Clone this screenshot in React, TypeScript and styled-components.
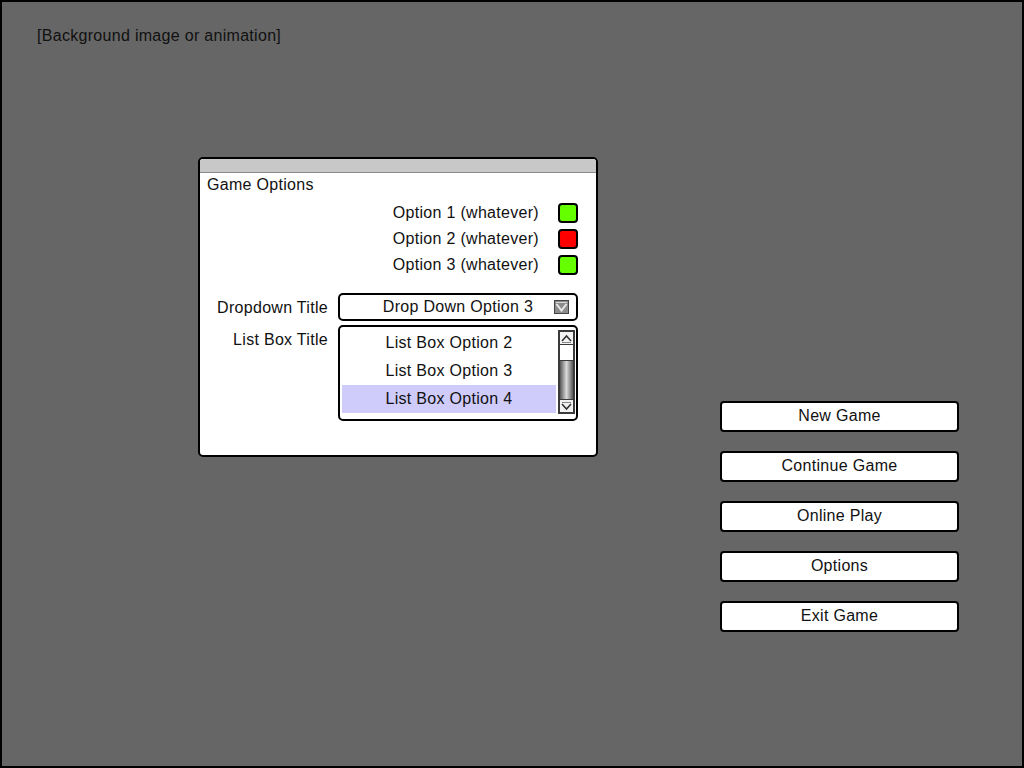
import React from 'react';
import styled, { createGlobalStyle } from 'styled-components';

const GlobalStyle = createGlobalStyle`
  html, body {
    margin: 0;
    padding: 0;
    background: #666;
  }
  body {
    font-family: 'Liberation Sans', Arial, sans-serif;
  }
  * {
    box-sizing: border-box;
  }
`;

const options = [
    { label: 'Option 1 (whatever)', on: true },
    { label: 'Option 2 (whatever)', on: false },
    { label: 'Option 3 (whatever)', on: true },
];

const listItems = ['List Box Option 2', 'List Box Option 3', 'List Box Option 4'];
const menuItems = ['New Game', 'Continue Game', 'Online Play', 'Options', 'Exit Game'];

const Screen = styled.div`
  width: 1024px;
  height: 768px;
  background: #666;
  border: 2px solid #000;
  font-size: 16px;
  line-height: 18px;
  letter-spacing: 0.3px;
  color: #111;
  display: flex;
  flex-direction: column;
`;

const Caption = styled.div`
  padding: 25px 0 0 35px;
  height: 42px;
`;

const Stage = styled.div`
  display: flex;
  align-items: flex-start;
`;

const Dialog = styled.section`
  width: 400px;
  height: 300px;
  margin: 113px 0 0 196px;
  background: #fff;
  border: 2px solid #000;
  border-radius: 5px;
  overflow: hidden;
  display: flex;
  flex-direction: column;
`;

const TitleBar = styled.div`
  height: 14px;
  background: #c8c8c8;
  border-bottom: 1px solid #8a8a8a;
`;

const DialogBody = styled.div`
  padding: 3px 18px 0 7px;
`;

const OptionList = styled.div`
  margin-top: 6px;
  display: flex;
  flex-direction: column;
  align-items: flex-end;
`;

const OptionRow = styled.div`
  height: 26px;
  display: flex;
  align-items: center;
  gap: 19px;
`;

const Toggle = styled.span<{ $on: boolean }>`
  width: 20px;
  height: 20px;
  border: 2px solid #000;
  border-radius: 4px;
  background: ${({ $on }) => ($on ? '#66ff00' : '#ff0000')};
`;

const Fields = styled.div`
  margin-top: 15px;
  display: grid;
  grid-template-columns: 1fr 240px;
  column-gap: 10px;
  row-gap: 4px;
`;

const FieldLabel = styled.div<{ $top?: boolean }>`
  text-align: right;
  align-self: ${({ $top }) => ($top ? 'start' : 'center')};
  margin-top: ${({ $top }) => ($top ? '6px' : '1px')};
`;

const Dropdown = styled.div`
  height: 28px;
  border: 2px solid #000;
  border-radius: 5px;
  display: grid;
  grid-template-columns: 24px 1fr 24px;
  align-items: center;
  text-align: center;
`;

const DropIcon = styled.svg`
  justify-self: start;
  margin-left: 2px;
  display: block;
`;

const ListBox = styled.div`
  height: 96px;
  border: 2px solid #000;
  border-radius: 5px;
  padding: 2px 1px 0 2px;
  display: flex;
`;

const Items = styled.div`
  flex: 1;
  display: flex;
  flex-direction: column;
`;

const ListItem = styled.div<{ $selected?: boolean }>`
  height: 28px;
  display: flex;
  align-items: center;
  justify-content: center;
  background: ${({ $selected }) => ($selected ? '#cfcbfb' : 'transparent')};
`;

const Scrollbar = styled.div`
  width: 17px;
  margin: 1px 0 5px 2px;
  border: 2px solid #3a3a3a;
  display: flex;
  flex-direction: column;
  background: #fff;
`;

const ScrollButton = styled.div<{ $down?: boolean }>`
  height: 13px;
  background: #f2f2f2;
  border-top: ${({ $down }) => ($down ? '1px solid #3a3a3a' : 'none')};
  border-bottom: ${({ $down }) => ($down ? 'none' : '1px solid #3a3a3a')};
  display: flex;
  align-items: center;
  justify-content: center;
`;

const Track = styled.div`
  flex: 1;
  display: flex;
  flex-direction: column;
  justify-content: flex-end;
`;

const Thumb = styled.div`
  height: 39px;
  border-top: 1px solid #3a3a3a;
  background: linear-gradient(to right, #555 0%, #999 25%, #d8d8d8 50%, #999 75%, #555 100%);
`;

const Menu = styled.nav`
  width: 239px;
  margin: 357px 0 0 122px;
  display: flex;
  flex-direction: column;
  gap: 19px;
`;

const MenuButton = styled.button`
  height: 31px;
  padding: 0 0 1px;
  border: 2px solid #000;
  border-radius: 4px;
  background: #fff;
  color: #111;
  font: inherit;
  letter-spacing: inherit;
  cursor: pointer;
`;

const Chevron = ({ down }: { down?: boolean }) => (
    <svg width="11" height="9" viewBox="0 0 11 9">
        <path
            d={down ? 'M1 2 L5.5 7 L10 2' : 'M1 7 L5.5 2 L10 7'}
            fill="none"
            stroke="#333"
            strokeWidth="1.6"
        />
        <path d={down ? 'M1 0.5 H10' : 'M1 8.5 H10'} stroke="#888" strokeWidth="1" />
    </svg>
);

const App: React.FC = () => {
    return (
        <>
            <GlobalStyle />
            <Screen>
                <Caption>[Background image or animation]</Caption>
                <Stage>
                    <Dialog>
                        <TitleBar />
                        <DialogBody>
                            <div>Game Options</div>
                            <OptionList>
                                {options.map((opt) => (
                                    <OptionRow key={opt.label}>
                                        <span>{opt.label}</span>
                                        <Toggle $on={opt.on} />
                                    </OptionRow>
                                ))}
                            </OptionList>
                            <Fields>
                                <FieldLabel>Dropdown Title</FieldLabel>
                                <Dropdown>
                                    <span />
                                    <span>Drop Down Option 3</span>
                                    <DropIcon width="15" height="14" viewBox="0 0 15 14">
                                        <rect x="0.5" y="0.5" width="14" height="13" fill="#8c8c8c" stroke="#444" />
                                        <path d="M2 2.5 H13" stroke="#d8d8d8" strokeWidth="1.2" />
                                        <path d="M2.5 4 L7.5 10.5 L12.5 4" fill="none" stroke="#e8e8e8" strokeWidth="2" />
                                    </DropIcon>
                                </Dropdown>
                                <FieldLabel $top>List Box Title</FieldLabel>
                                <ListBox>
                                    <Items>
                                        {listItems.map((item, idx) => (
                                            <ListItem key={item} $selected={idx === listItems.length - 1}>
                                                {item}
                                            </ListItem>
                                        ))}
                                    </Items>
                                    <Scrollbar>
                                        <ScrollButton>
                                            <Chevron />
                                        </ScrollButton>
                                        <Track>
                                            <Thumb />
                                        </Track>
                                        <ScrollButton $down>
                                            <Chevron down />
                                        </ScrollButton>
                                    </Scrollbar>
                                </ListBox>
                            </Fields>
                        </DialogBody>
                    </Dialog>
                    <Menu>
                        {menuItems.map((item) => (
                            <MenuButton key={item}>{item}</MenuButton>
                        ))}
                    </Menu>
                </Stage>
            </Screen>
        </>
    );
};

export default App;
